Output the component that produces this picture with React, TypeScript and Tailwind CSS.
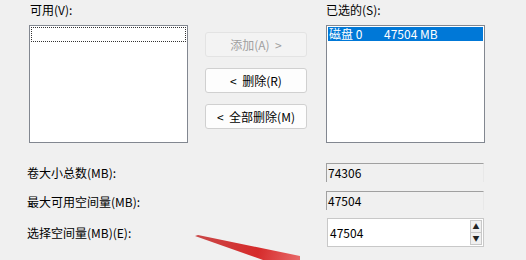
const FONT = "font-['Microsoft_YaHei_UI','Noto_Sans_CJK_SC','Noto_Sans',sans-serif]";

function ListBox({ children }: { children?: React.ReactNode }) {
  return (
    <div className="h-[118px] w-[159px] border border-[#828790] bg-white p-px">
      {children}
    </div>
  );
}

function DialogButton({ label, disabled }: { label: string; disabled?: boolean }) {
  return (
    <div
      className={`flex h-[25px] w-[102px] items-center justify-center whitespace-pre rounded-[3px] border text-[12px] ${
        disabled
          ? "border-[#e3e3e3] bg-[#f3f3f3] text-[#a0a0a0]"
          : "border-[#d0d0d0] bg-[#fdfdfd] text-black"
      }`}
    >
      {label}
    </div>
  );
}

function ReadOnlyField({ value }: { value: string }) {
  return (
    <div className="flex h-[19px] w-[158px] items-center border-t border-l border-t-[#a0a0a0] border-l-[#a0a0a0] border-r border-r-[#e8e8e8] bg-[#f0f0f0] pl-[1px] text-[12px] text-black">
      {value}
    </div>
  );
}

export default function App() {
  return (
    <div className={`relative h-[260px] w-[526px] overflow-hidden bg-[#f0f0f0] text-[12px] leading-none text-black ${FONT}`}>
      <div className="flex pl-[29px] pt-[4px]">
        <div className="flex flex-col">
          <div className="h-[21px] pl-[1px]">可用(V):</div>
          <ListBox>
            <div className="h-[15px] border border-dotted border-[#333]" />
          </ListBox>
        </div>
        <div className="ml-[17px] mt-[28px] flex flex-col gap-[11px]">
          <DialogButton label="添加(A)  >" disabled />
          <DialogButton label="<  删除(R)" />
          <DialogButton label="<  全部删除(M)" />
        </div>
        <div className="ml-[19px] flex flex-col">
          <div className="h-[21px]">已选的(S):</div>
          <ListBox>
            <div className="flex h-[14px] items-center bg-[#0078d7] text-white">
              <span className="w-[56px] pl-[1px]">磁盘 0</span>
              <span>47504 MB</span>
            </div>
          </ListBox>
        </div>
      </div>

      <div className="mt-[20px] flex flex-col">
        <div className="flex items-center">
          <div className="w-[326px] pl-[27px]">卷大小总数(MB):</div>
          <ReadOnlyField value="74306" />
        </div>
        <div className="mt-[9px] flex items-center">
          <div className="w-[326px] pl-[27px] pt-[3px]">最大可用空间量(MB):</div>
          <ReadOnlyField value="47504" />
        </div>
        <div className="mt-[8px] flex items-center">
          <div className="w-[327px] pl-[27px]">选择空间量(MB)(E):</div>
          <div className="flex h-[29px] w-[157px] items-stretch border border-[#c8c8c8] bg-white">
            <div className="flex flex-1 items-center pl-[2px] text-[12px]">47504</div>
            <div className="my-[1px] mr-[1px] flex w-[12px] flex-col border border-[#c8c8c8] bg-[#f0f0f0]">
              <div className="flex flex-1 items-center justify-center border-b border-[#c8c8c8] text-[7px] leading-none text-[#222]">▲</div>
              <div className="flex flex-1 items-center justify-center text-[7px] leading-none text-[#222]">▼</div>
            </div>
          </div>
        </div>
      </div>

      <svg className="absolute left-0 top-0" width="526" height="260" viewBox="0 0 526 260">
        <defs>
          <linearGradient id="arw" x1="195" y1="235" x2="300" y2="262" gradientUnits="userSpaceOnUse">
            <stop offset="0" stopColor="#c94848" />
            <stop offset="0.6" stopColor="#d62b2b" />
            <stop offset="1" stopColor="#e86a6a" />
          </linearGradient>
        </defs>
        <polygon points="195,236 198,235 300,256 300,266 280,266" fill="url(#arw)" />
      </svg>
    </div>
  );
}
